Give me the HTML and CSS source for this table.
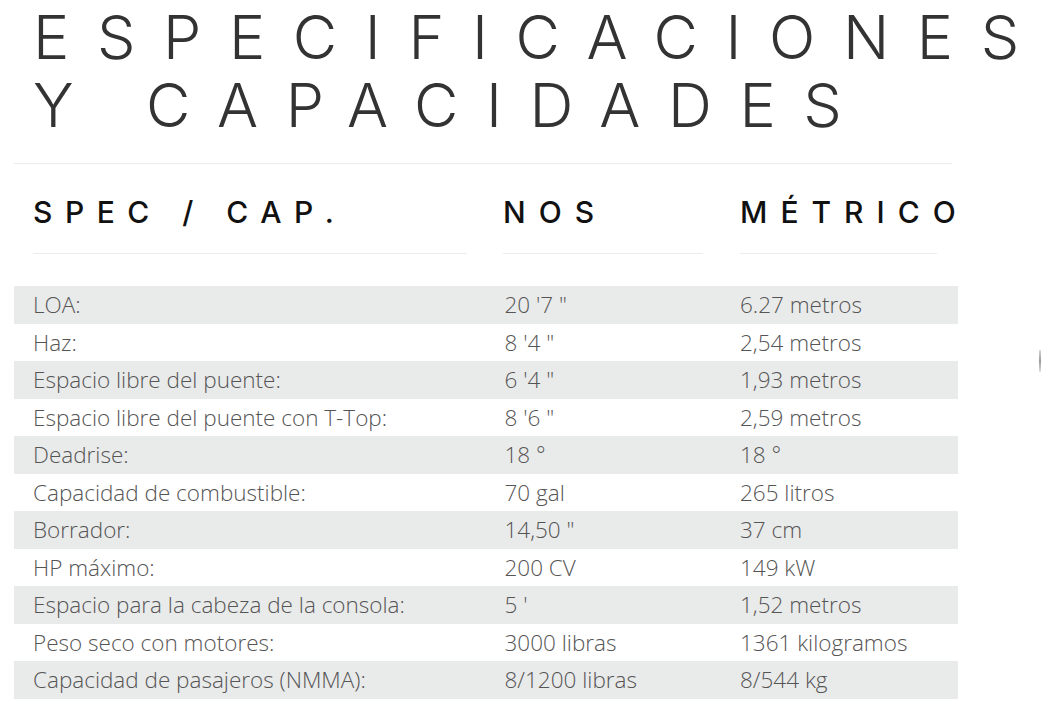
FILE: index.html
```html
<!DOCTYPE html>
<html lang="es">
<head>
<meta charset="utf-8">
<title>Especificaciones y capacidades</title>
<link rel="stylesheet" href="styles.css">
</head>
<body>
<main class="page">
  <h1 class="title"><span class="title-line">ESPECIFICACIONE<span class="last">S</span></span> <span class="title-line">Y CAPACIDADE<span class="last">S</span></span></h1>
  <hr class="rule">
  <section class="specs">
    <div class="row head">
      <div class="hcell">SPEC / CAP.</div>
      <div class="hcell">NOS</div>
      <div class="hcell">MÉTRIC<span class="last">O</span></div>
    </div>
    <div class="body">
      <div class="row item"><span>LOA:</span><span>20 '7 "</span><span>6.27 metros</span></div>
      <div class="row item"><span>Haz:</span><span>8 '4 "</span><span>2,54 metros</span></div>
      <div class="row item"><span>Espacio libre del puente:</span><span>6 '4 "</span><span>1,93 metros</span></div>
      <div class="row item"><span>Espacio libre del puente con T-Top:</span><span>8 '6 "</span><span>2,59 metros</span></div>
      <div class="row item"><span>Deadrise:</span><span>18 °</span><span>18 °</span></div>
      <div class="row item"><span>Capacidad de combustible:</span><span>70 gal</span><span>265 litros</span></div>
      <div class="row item"><span>Borrador:</span><span>14,50 "</span><span>37 cm</span></div>
      <div class="row item"><span>HP máximo:</span><span>200 CV</span><span>149 kW</span></div>
      <div class="row item"><span>Espacio para la cabeza de la consola:</span><span>5 '</span><span>1,52 metros</span></div>
      <div class="row item"><span>Peso seco con motores:</span><span>3000 libras</span><span>1361 kilogramos</span></div>
      <div class="row item"><span>Capacidad de pasajeros (NMMA):</span><span>8/1200 libras</span><span>8/544 kg</span></div>
    </div>
  </section>
  <div class="edge-mark"></div>
</main>
</body>
</html>
```

FILE: styles.css
```css
html, body {
  margin: 0;
  padding: 0;
  background: #ffffff;
}

body {
  font-family: "Open Sans", "Liberation Sans", sans-serif;
  overflow: hidden;
}

.page {
  position: relative;
  width: 1041px;
  height: 706px;
  padding-left: 14px;
  box-sizing: border-box;
}

.title {
  margin: 3px 0 0 0;
  padding-left: 19px;
  font-family: "Inter", "Liberation Sans", sans-serif;
  font-weight: 270;
  font-size: 61px;
  line-height: 68px;
  letter-spacing: 27.6px;
  color: #333333;
  white-space: nowrap;
}

.title-line {
  display: block;
}

.last {
  letter-spacing: 0;
}

.rule {
  width: 938px;
  margin: 24px 0 0 0;
  border: 0;
  border-top: 1px solid #ececec;
  height: 0;
}

.specs {
  width: 944px;
}

.row {
  display: grid;
  grid-template-columns: 434px 200px 198px;
  column-gap: 36px;
  padding: 0 20px 0 19px;
}

.row > :nth-child(3) {
  margin-left: 1px;
}

.head {
  padding-top: 30px;
}

.hcell {
  font-family: "Inter", "Liberation Sans", sans-serif;
  font-weight: 480;
  font-size: 30px;
  line-height: 36px;
  letter-spacing: 13px;
  color: #111111;
  white-space: nowrap;
  padding-bottom: 23px;
  border-bottom: 1px solid #ececec;
}

.hcell:first-child {
  letter-spacing: 12.5px;
}

.body {
  margin-top: 32px;
}

.item {
  height: 37.5px;
  line-height: 37.5px;
  font-weight: 300;
  font-size: 22.5px;
  color: #555555;
  white-space: nowrap;
}

.item > span:nth-child(2) {
  padding-left: 1.5px;
}

.item:nth-child(odd) {
  background: #e9eaea;
}

.edge-mark {
  position: absolute;
  right: 0;
  top: 347px;
  width: 2px;
  height: 22px;
  background: linear-gradient(#d8d8d8, #9a9a9a 50%, #e0e0e0);
}
```
